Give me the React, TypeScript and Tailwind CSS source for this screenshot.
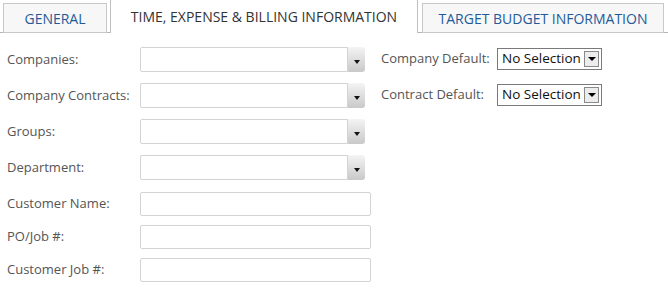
import React from 'react';

const font = { fontFamily: '"Open Sans", "Noto Sans", Arial, sans-serif' };

function ComboBox() {
  return (
    <div className="flex h-[25px] w-[225px]">
      <div className="flex-1 border border-[#d3d3d3] rounded-l-[2px] bg-white" />
      <div className="w-[17px] flex items-end justify-center pb-[8px] rounded-r-[3px] bg-gradient-to-b from-[#f4f4f4] to-[#c9c9c9]">
        <span className="w-0 h-0 border-l-[3px] border-r-[3px] border-t-[4px] border-l-transparent border-r-transparent border-t-[#111]" />
      </div>
    </div>
  );
}

function TextBox() {
  return <div className="h-[24px] w-[231px] border border-[#d3d3d3] rounded-[2px] bg-white" />;
}

function Select() {
  return (
    <div className="h-[22px] w-[105px] border border-[#7a7a7a] bg-white flex items-center pl-[4px] pr-[2px]">
      <span className="flex-1 text-[13.5px] text-[#111] leading-none">No Selection</span>
      <div className="w-[15px] h-[16px] border border-[#8a8a8a] bg-[#ececec] flex items-center justify-center">
        <span className="w-0 h-0 border-l-[4px] border-r-[4px] border-t-[4px] border-l-transparent border-r-transparent border-t-[#000]" />
      </div>
    </div>
  );
}

function Row({ label, children, h }: { label: string; children: React.ReactNode; h: string }) {
  return (
    <div className={`flex items-center ${h}`}>
      <span className="w-[133px] text-[13px] text-[#555]">{label}</span>
      {children}
    </div>
  );
}

export default function App() {
  return (
    <div className="w-[668px] h-[289px] bg-white overflow-hidden" style={font}>
      {/* Tabs */}
      <div className="h-[33px] flex items-end pl-[3px] border-b border-[#b5b5b5]">
        <div className="w-[104px] h-[30px] -mb-px border border-[#c8c8c8] bg-[#f7f7f7] flex items-center justify-center text-[14px] text-[#1f5b99]">
          GENERAL
        </div>
        <div className="ml-[3px] w-[308px] h-[34px] -mb-px border border-b-0 border-[#c0c0c0] bg-white flex items-center justify-center text-[14px] text-[#333]">
          TIME, EXPENSE &amp; BILLING INFORMATION
        </div>
        <div className="ml-[4px] w-[242px] h-[30px] -mb-px border border-[#c8c8c8] bg-[#f7f7f7] flex items-center justify-center text-[14px] text-[#1f5b99]">
          TARGET BUDGET INFORMATION
        </div>
      </div>

      <div className="flex pl-[7px] pt-[14px]">
        {/* Left column */}
        <div className="flex flex-col w-[374px]">
          <div className="flex flex-col gap-[11px]">
            <Row label="Companies:" h="h-[25px]"><ComboBox /></Row>
            <Row label="Company Contracts:" h="h-[25px]"><ComboBox /></Row>
            <Row label="Groups:" h="h-[25px]"><ComboBox /></Row>
            <Row label="Department:" h="h-[25px]"><ComboBox /></Row>
          </div>
          <div className="flex flex-col gap-[9px] mt-[12px]">
            <Row label="Customer Name:" h="h-[24px]"><TextBox /></Row>
            <Row label="PO/Job #:" h="h-[24px]"><TextBox /></Row>
            <Row label="Customer Job #:" h="h-[24px]"><TextBox /></Row>
          </div>
        </div>

        {/* Right column */}
        <div className="flex flex-col gap-[14px] pt-[1px]">
          <div className="flex items-center h-[22px]">
            <span className="w-[116px] text-[13px] text-[#555]">Company Default:</span>
            <Select />
          </div>
          <div className="flex items-center h-[22px]">
            <span className="w-[116px] text-[13px] text-[#555]">Contract Default:</span>
            <Select />
          </div>
        </div>
      </div>
    </div>
  );
}
